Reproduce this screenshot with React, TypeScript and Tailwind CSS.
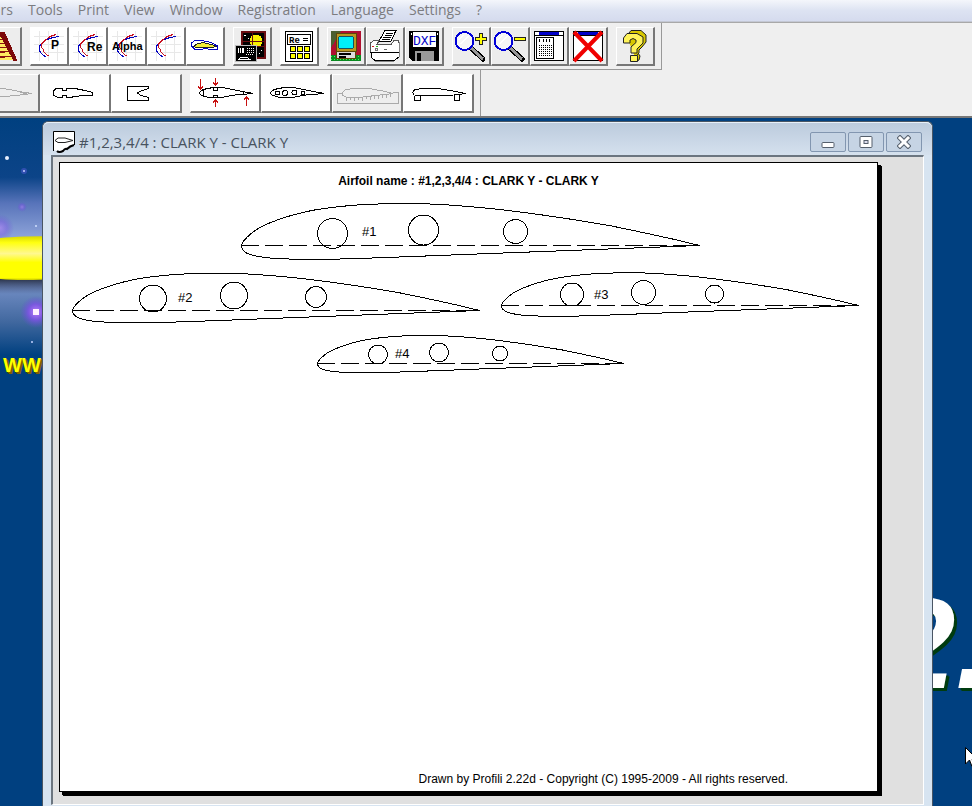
import React from "react";

type Pt = [number, number];

const UPPER: Pt[] = [
  [0, 0], [0.001, 0.0037], [0.004, 0.0089], [0.008, 0.0137], [0.012, 0.0179], [0.02, 0.0254],
  [0.03, 0.033], [0.04, 0.0392], [0.05, 0.0443], [0.06, 0.0487], [0.08, 0.0563], [0.1, 0.063],
  [0.12, 0.0687], [0.14, 0.0736], [0.16, 0.0776], [0.18, 0.0808], [0.2, 0.0834], [0.24, 0.0876],
  [0.28, 0.0901], [0.32, 0.0912], [0.36, 0.0916], [0.4, 0.0911], [0.44, 0.0893], [0.48, 0.0864],
  [0.52, 0.0831], [0.56, 0.079], [0.6, 0.0742], [0.65, 0.0676], [0.7, 0.0604], [0.75, 0.0525],
  [0.8, 0.0442], [0.85, 0.034], [0.9, 0.0232], [0.95, 0.0122], [1, 0],
];
const LOWER: Pt[] = [
  [0.9, -0.0038], [0.8, -0.0077], [0.7, -0.0115], [0.6, -0.0153], [0.5, -0.0191], [0.4, -0.023],
  [0.3, -0.0268], [0.2, -0.03], [0.16, -0.0303], [0.12, -0.0299], [0.1, -0.0294], [0.08, -0.0285],
  [0.06, -0.0271], [0.05, -0.026], [0.04, -0.0245], [0.03, -0.0226], [0.02, -0.0203],
  [0.012, -0.017], [0.008, -0.0143], [0.004, -0.0105], [0.001, -0.0059],
];

type Rib = { name: string; x: number; y: number; chord: number; label: Pt; holes: [number, number, number][] };

const RIBS: Rib[] = [
  { name: "#1", x: 241, y: 245.5, chord: 458, label: [362, 236], holes: [[332.5, 233.5, 15], [423.5, 230, 15], [515.5, 231.5, 12]] },
  { name: "#2", x: 72, y: 310.5, chord: 407, label: [178, 302], holes: [[153, 298.5, 13.5], [234, 295.5, 13.5], [316, 297, 10.5]] },
  { name: "#3", x: 501, y: 305.5, chord: 357, label: [594, 299], holes: [[572, 294.5, 11.5], [643.5, 292.5, 12], [714.5, 294, 9]] },
  { name: "#4", x: 317, y: 363.5, chord: 306, label: [395, 358], holes: [[378, 354.5, 9.5], [439, 352.5, 9.5], [500, 353.5, 7.5]] },
];

function RibPlan() {
  return (
    <svg viewBox="60 193 817 190" className="block w-full" role="img" aria-label="Airfoil ribs">
      {RIBS.map((r) => (
        <g key={r.name}>
          <g fill="none" stroke="#000" strokeWidth="1" shapeRendering="crispEdges">
            <polygon points={[...UPPER, ...LOWER].map(([x, y]) => `${r.x + 0.5 + x * r.chord},${r.y - y * r.chord}`).join(" ")} />
            <line x1={r.x} x2={r.x + r.chord} y1={r.y} y2={r.y} strokeDasharray="18 6" />
            {r.holes.map(([cx, cy, rad]) => (
              <circle key={cx} cx={cx} cy={cy} r={rad} />
            ))}
          </g>
          <text x={r.label[0]} y={r.label[1]} fontSize="13" fontFamily="Liberation Sans, sans-serif">{r.name}</text>
        </g>
      ))}
    </svg>
  );
}

/* ---------- main toolbar icons, 36 x 36 ---------- */

function Polar({ text, tx, ty, size = 12 }: { text?: string; tx?: number; ty?: number; size?: number }) {
  return (
    <>
      <path d="M3 8.500H33M3 16.500H33M3 24.500H33M8.500 3V33M17.500 3V33M26.500 3V33" stroke="#e8e8e8" />
      <path d="M28 8.500L22 9.500L16 11.500L12 14.500L8.500 18V23L11 26L14.500 29" stroke="#0000c0" />
      <path d="M25 6.500L19 8.500L14 12.500L10 16.500L10 19L12.500 21.500L13 24L16 27H18" stroke="#c81020" />
      {text && (
        <text x={tx} y={ty} fontSize={size} fontWeight="700" fontFamily="Liberation Sans, sans-serif" fill="#000" stroke="none">{text}</text>
      )}
    </>
  );
}

function Lens() {
  return (
    <>
      <path d="M18 20L30 31" stroke="#000" strokeWidth="5" strokeLinecap="round" />
      <path d="M18 20L30 31" stroke="#999" strokeWidth="3" />
      <circle cx="11.500" cy="13" r="9" fill="#f6f6f6" stroke="#0000d8" strokeWidth="2" />
      <path d="M6 12L10 7M8 16L15 8" stroke="#fff" strokeWidth="1.500" />
    </>
  );
}

function ReportFrame() {
  return (
    <>
      <rect x="3.500" y="3.500" width="29" height="29" fill="#fff" stroke="#000" />
      <rect x="8" y="4" width="20" height="3" fill="#0000c8" />
      <path d="M4 7.500H32" stroke="#000" />
    </>
  );
}

const icons = {
  ladder: (
    <>
      <path d="M2 32L14 5H20L32 32Z" fill="#ffe860" />
      <path d="M14 8H22M13 12L23 11M11 16L25 15M9 20L26 19M7 25L29 23M5 30L31 28" stroke="#8a1010" strokeWidth="1.500" />
      <path d="M16 5H20L32 32H30Z" fill="#7c0808" stroke="#7c0808" strokeWidth="2" />
    </>
  ),
  p: <Polar text="P" tx={20} ty={21} />,
  re: <Polar text="Re" tx={17} ty={23} />,
  alpha: <Polar text="Alpha" tx={3} ty={22} size={11} />,
  polar: <Polar />,
  foils: (
    <>
      <path d="M6 18.500L10 16L16 14.500L24 16.500L31 18.500L24 19.500L12 20Z" fill="#f2ee38" stroke="#222" />
      <path d="M8 21.500L4.500 18V15L8 12.500H15L24 14.500L30.500 18V21L27 22L18 20.500L14 21.500Z" stroke="#0000c0" />
    </>
  ),
  sim: (
    <>
      <rect x="7.500" y="3.500" width="23" height="26" fill="#000" stroke="#6a0c10" strokeWidth="2" />
      <circle cx="22" cy="13" r="6.500" fill="#f8f000" />
      <path d="M18.500 4V18M8 13H30M8 18H30" stroke="#6a0c10" />
      <path d="M10 7h2M14 10h1M27 22h1M25 25h1" stroke="#fff" />
      <rect x="1.500" y="17.500" width="21" height="16" fill="#000" stroke="#bbb" />
      <path d="M4.500 20V25M6.500 20V25M8 20L10 25M10 20L8 25" stroke="#fff" />
      <path d="M13 20.500H21M13 22.500H21M13 24.500H21M12 26.500H20" stroke="#fff" strokeDasharray="1 1" />
      <path d="M4 31.500L7 29.500H13L16 31.500H4" stroke="#fff" />
    </>
  ),
  calc: (
    <>
      <rect x="4.500" y="3.500" width="27" height="30" fill="#fff" stroke="#000" />
      <rect x="6.500" y="6.500" width="23" height="10" fill="#fff" stroke="#000" />
      <text x="8" y="15" fontSize="9" fontWeight="700" fontFamily="Liberation Mono, monospace" fill="#000" stroke="none">Re</text>
      <path d="M22 10.500h5M22 12.500h5" stroke="#000" />
      {[9, 16, 23].map((x) => [18.5, 25.5].map((y) => <rect key={`${x}-${y}`} x={x + 0.5} y={y} width="5" height="5" fill="#ffff00" stroke="#000" />))}
    </>
  ),
  tv: (
    <>
      <rect x="3" y="3" width="30" height="30" fill="#b01030" />
      <path d="M3 3H13L3 20Z" fill="#4c6030" />
      <path d="M3 27H33V33H3Z" fill="#0a8a20" />
      <path d="M3 28.500H33M3 31.500H33" stroke="#40ff50" strokeDasharray="1 2" />
      <rect x="8.500" y="5.500" width="20" height="18" fill="#b89820" stroke="#5c4808" />
      <rect x="10.500" y="8.500" width="15" height="12" rx="2" fill="#00f0f8" stroke="#185060" />
      <rect x="8.500" y="23.500" width="19" height="7" fill="#ddd" stroke="#5c4808" />
      <path d="M11 26H23M11 29H18" stroke="#000" strokeWidth="2" />
    </>
  ),
  printer: (
    <>
      <path d="M12 13L18 2.500H29L24 13Z" fill="#fff" stroke="#000" />
      <path d="M19 5.500H26M18 7.500H25M16 9.500H24M15 11.500H23" stroke="#000" />
      <path d="M3.500 15L7 12.500H12L10 16.500H24L27 12.500H31L32 15V24H3.500Z" fill="#fff" stroke="#555" />
      <path d="M4 24.500V29L8 32.500H27L32 29V24" fill="#fff" stroke="#000" />
      <path d="M3 24.500H32" stroke="#000" />
      <path d="M32.500 14V29M8 33.500H27" stroke="#888" />
      <path d="M5 18.500h2" stroke="#d02020" /><path d="M9 18.500h2" stroke="#20c020" />
      <rect x="8.500" y="20.500" width="2" height="2" stroke="#777" /><path d="M17 21.500h3" stroke="#666" />
    </>
  ),
  dxf: (
    <>
      <path d="M3 3H33V33H6L3 30Z" fill="#000" />
      <rect x="7" y="4" width="23" height="15" fill="#fff" />
      <text x="7" y="17" fontSize="13" fontFamily="Liberation Mono, monospace" fill="#0000c8" stroke="none">DXF</text>
      <rect x="9" y="23" width="19" height="10" fill="#999" />
      <rect x="11" y="25" width="4" height="8" fill="#000" />
      <path d="M31 6h1M5 6h1" stroke="#fff" strokeWidth="2" />
    </>
  ),
  zoomIn: (
    <>
      <Lens />
      <path d="M26.500 5.500H29.500V9.500H33.500V12.500H29.500V16.500H26.500V12.500H22.500V9.500H26.500Z" fill="#ffff00" stroke="#222" />
    </>
  ),
  zoomOut: (
    <>
      <Lens />
      <rect x="22.500" y="9.500" width="11" height="3" fill="#ffff00" stroke="#222" />
    </>
  ),
  report: (
    <>
      <ReportFrame />
      <rect x="5.500" y="9.500" width="17" height="21" fill="#fff" stroke="#000" />
      <path d="M8.500 11v3M12.500 11v3M15.500 11v3M18.500 11v3" stroke="#000" />
      <path d="M8 17.500h13M8 19.500h13M8 21.500h13M8 23.500h13M8 25.500h13M8 27.500h13" stroke="#000" strokeDasharray="1 1" />
    </>
  ),
  close: (
    <>
      <ReportFrame />
      <path d="M4 4L32 33M32 4L4 33" stroke="#f00000" strokeWidth="4" shapeRendering="auto" />
    </>
  ),
  help: (
    <g shapeRendering="auto" strokeLinejoin="round">
      <path d="M9.500 8L14 2.500H24L29 7V14L25 19L22 22V25L18 29" fill="#d8c800" stroke="#222" />
      <path d="M6.500 15V10L10 5.500H20L26 9V15L22 19L20 21V25H14V19L19 14.500V12L16 10.500L13 12V15Z" fill="#fff45a" stroke="#222" />
      <path d="M21 25L23 28L22 32L20 33" fill="#d8c800" stroke="#222" />
      <rect x="13.500" y="27.500" width="7" height="6" fill="#fff45a" stroke="#222" />
    </g>
  ),
};

type IconName = keyof typeof icons;

const GROUPS: { icon: IconName; label: string; grey?: boolean }[][] = [
  [{ icon: "ladder", label: "Wing", grey: true }],
  [
    { icon: "p", label: "Polars" }, { icon: "re", label: "Polars by Reynolds" }, { icon: "alpha", label: "Polars by alpha" },
    { icon: "polar", label: "Compare polars" }, { icon: "foils", label: "Compare airfoils" },
  ],
  [{ icon: "sim", label: "Process polars", grey: true }],
  [{ icon: "calc", label: "Reynolds calculator" }],
  [{ icon: "tv", label: "Screen", grey: true }, { icon: "printer", label: "Print", grey: true }, { icon: "dxf", label: "Export DXF", grey: true }],
  [
    { icon: "zoomIn", label: "Zoom in", grey: true }, { icon: "zoomOut", label: "Zoom out", grey: true },
    { icon: "report", label: "Report", grey: true }, { icon: "close", label: "Close window", grey: true },
  ],
  [{ icon: "help", label: "Help", grey: true }],
];

/* ---------- rib toolbar icons, 68 x 36 ---------- */

const FOIL = "M8 18L12 14.500L22 12.500H32L44 15L62 18.500L44 20L30 22.500L16 22L10 20Z";

const ribIcons = {
  plain: <path d="M6 18L12 14L24 12.500L40 14.500L52 17L62 18.500L50 20L30 22L12 21L6 18M50 17L57 19" stroke="#aaa" />,
  slots: <path d="M12.500 16L15 13.500H21.500V15.500H25.500V13.500H34L44 15.500L51.500 17.500V20.500H42L28 22.500H25.500V20.500H21.500V22.500H17L12.500 20Z" stroke="#000" />,
  notch: <path d="M36.500 11.500H15.500V25.500H36.500V22.500L29 20.500L25.500 18L30 15.500L36.500 13.500Z" stroke="#000" />,
  stations: (
    <>
      <path d={FOIL} stroke="#000" />
      <path d="M12.500 14V22M22.500 13V15.500H26.500V13M22.500 22V20.500H26.500V22M52.500 16V20" stroke="#000" />
      <path d="M9.500 4V14M7 11.500L9.500 14L12 11.500M24.500 3V10M22 7.500L24.500 10L27 7.500M24.500 32V25M22 27.500L24.500 25L27 27.500M55.500 31V22M53 24.500L55.500 22L58 24.500" stroke="#c81010" />
    </>
  ),
  holes: (
    <>
      <path d={FOIL} stroke="#000" />
      <g stroke="#000"><circle cx="15.500" cy="18" r="2" /><circle cx="23" cy="18" r="2.500" /><circle cx="32.500" cy="17.500" r="2.500" /><circle cx="41" cy="18" r="2" /></g>
    </>
  ),
  jig: (
    <>
      <path d="M9 18V20L13 22H30L60 18.500L50 16L36 13.500H20L12 15L9 18" stroke="#aaa" />
      <path d="M4.500 18.500H9M60 17.500H65V28.500H4.500V18M13.500 22v4M17.500 22v3M21.500 22v4M25.500 22v3M29.500 22v4M33.500 21v3M37.500 21v4M41.500 21v3M45.500 20v4M49.500 20v3M53.500 20v3M57.500 19v3" stroke="#aaa" />
    </>
  ),
  feet: <path d="M10.500 20.500L8.500 17.500L11 14.500L20 13.500H34L46 15.500L61.500 18.500L50 20L24 20.500H10.500M10.500 20.500V25.500H16.500V20.500M50.500 19.500V25.500H55.500V19.500" stroke="#000" />,
};

const RIB_GROUPS: { icon: keyof typeof ribIcons; label: string; off?: boolean }[][] = [
  [{ icon: "plain", label: "Plain rib", off: true }, { icon: "slots", label: "Spar slots" }, { icon: "notch", label: "Trailing edge notch" }],
  [
    { icon: "stations", label: "Stations" }, { icon: "holes", label: "Lightening holes" },
    { icon: "jig", label: "Jig", off: true }, { icon: "feet", label: "Building feet" },
  ],
];

const raised = "block h-[39px] border-t border-l border-r-2 border-b-2 border-t-white border-l-white border-r-[#777] border-b-[#777]";

function MenuBar() {
  return (
    <nav className="flex h-[22px] gap-[15px] overflow-hidden border-b border-[#c4c8d4] bg-linear-to-b from-[#f4f6fb] via-[#dde3f2] to-[#d5dbee] text-[14px] leading-[19px] text-[#7c7c80]">
      <button className="-ml-[19px] h-[19px] w-[32px] text-right">Bars</button>
      {["Tools", "Print", "View", "Window", "Registration", "Language", "Settings", "?"].map((m) => (
        <button key={m} className="h-[19px]">{m}</button>
      ))}
    </nav>
  );
}

function Toolbars() {
  return (
    <div className="border-t border-b-2 border-t-[#a8a8a8] border-b-[#777] bg-[#efefef]">
      <div className="flex h-[47px] w-fit items-center gap-2 border-r border-b border-[#999] pr-[6px]">
        {GROUPS.map((g, i) => (
          <div key={i} className="flex first:-ml-[17px]">
            {g.map((b) => (
              <button key={b.icon} aria-label={b.label} className={`${raised} w-[39px] ${b.grey ? "bg-[#ededed]" : "bg-white"}`}>
                <svg viewBox="0 0 36 36" className="block size-9" fill="none" shapeRendering="crispEdges">{icons[b.icon]}</svg>
              </button>
            ))}
          </div>
        ))}
      </div>
      <div className="flex h-[46px] w-fit items-center gap-2 border-r border-[#999] pr-[6px]">
        {RIB_GROUPS.map((g, i) => (
          <div key={i} className="flex first:-ml-[31px]">
            {g.map((b) => (
              <button key={b.icon} aria-label={b.label} disabled={b.off} className={`${raised} w-[71px] ${b.off ? "bg-[#eeeeee]" : "bg-white"}`}>
                <svg viewBox="0 0 68 36" className="block h-9 w-[68px]" fill="none" shapeRendering="crispEdges">{ribIcons[b.icon]}</svg>
              </button>
            ))}
          </div>
        ))}
      </div>
    </div>
  );
}

function Splash() {
  return (
    <div className="absolute inset-0 overflow-hidden">
      <svg className="absolute top-0 left-0" width="60" height="260" viewBox="0 118 60 260" aria-hidden="true">
        <defs>
          <linearGradient id="sky" x1="0" y1="0" x2="0" y2="1">
            <stop offset="0" stopColor="#004080" />
            <stop offset="0.250" stopColor="#0c4488" />
            <stop offset="0.360" stopColor="#5874ba" />
            <stop offset="0.500" stopColor="#8ca2d8" />
            <stop offset="0.720" stopColor="#6f8bc2" />
            <stop offset="0.860" stopColor="#41689f" />
            <stop offset="1" stopColor="#004080" />
          </linearGradient>
          <linearGradient id="disk" x1="0" y1="0" x2="0" y2="1">
            <stop offset="0" stopColor="#d8d800" />
            <stop offset="0.150" stopColor="#ffff10" />
            <stop offset="0.400" stopColor="#fff890" />
            <stop offset="0.600" stopColor="#ffff00" />
            <stop offset="0.950" stopColor="#ffff00" />
            <stop offset="1" stopColor="#c8c800" />
          </linearGradient>
          <radialGradient id="glow">
            <stop offset="0" stopColor="#c080ff" />
            <stop offset="0.500" stopColor="#8050e8" stopOpacity="0.800" />
            <stop offset="1" stopColor="#6050d0" stopOpacity="0" />
          </radialGradient>
          <linearGradient id="shade" x1="0" y1="0" x2="0" y2="1">
            <stop offset="0" stopColor="#181c28" />
            <stop offset="1" stopColor="#303c60" stopOpacity="0" />
          </linearGradient>
        </defs>
        <rect y="118" width="60" height="237" fill="url(#sky)" />
        <circle cx="0" cy="228" r="14" fill="url(#glow)" opacity="0.500" />
        <circle cx="22" cy="207" r="5" fill="url(#glow)" opacity="0.500" />
        <path d="M0 276L60 278V294H0Z" fill="url(#shade)" />
        <path d="M0 238Q20 236 60 236V279Q20 281 0 279Z" fill="url(#disk)" />
        <circle cx="36" cy="312" r="16" fill="url(#glow)" />
        <rect x="33" y="309" width="6" height="6" fill="#fff0ff" />
        <circle cx="7" cy="158" r="2" fill="#e8f0ff" />
        <circle cx="24" cy="171" r="3" fill="#3050b0" />
        <circle cx="24" cy="171" r="1" fill="#c0c8ff" />
        <circle cx="36" cy="226" r="1" fill="#d0e0ff" />
        <circle cx="32" cy="342" r="1" fill="#c0d0ff" />
      </svg>
      <span className="absolute top-[235px] left-[3px] font-[Liberation_Sans,sans-serif] text-[20px] leading-[24px] font-bold text-[#ffff00] [text-shadow:1px_1px_0_#806000,2px_2px_0_#806000]">WW</span>
      <span className="absolute right-[-19px] bottom-[98px] font-[Liberation_Sans,sans-serif] text-[128px] leading-[128px] font-bold text-white italic [text-shadow:2px_2px_0_#003c10,3px_3px_0_#003c10]">2.</span>
    </div>
  );
}

const capButton = "grid h-5 w-9 place-items-center rounded-[2px] border border-[#8296b0] bg-[#c6d4e4]";

function DrawingWindow() {
  return (
    <section className="relative mt-[3px] mr-[39px] ml-[42px] flex flex-1 flex-col rounded-t-md border border-b-0 border-[#4a5664] bg-[#d7e4f1]">
      <header className="flex h-[33px] items-center rounded-t-md border-t border-[#e8f0f8] bg-linear-to-b from-[#bccbdd] to-[#d5e1ee] pt-[5px] pr-[10px] pl-[10px]">
        <svg width="22" height="22" viewBox="0 0 22 22" className="mr-1" fill="none" aria-hidden="true">
          <path d="M.5 21V.5H21.500V14Q17 15 15 18Q13 17 11 20Q6 22 5 20L.5 19Z" fill="#fff" />
          <path d="M.5 20V.5H21.500V14" stroke="#000" />
          <path d="M21 14Q17 15 14 18Q12 17 10 20Q6 22 4 20" stroke="#000" strokeWidth="2" />
          <path d="M2 9.500L5 7H12L20 9.500L12 11.500H5Z" stroke="#222" />
        </svg>
        <h1 className="flex-1 text-[15px] leading-[20px] text-[#48535f]">#1,2,3,4/4 : CLARK Y - CLARK Y</h1>
        <div className="flex gap-[2px]">
          <button aria-label="Minimize" className={capButton}>
            <svg width="14" height="14" viewBox="0 0 14 14"><rect x="1" y="7.500" width="12" height="5" rx="1" fill="#fff" stroke="#555f6c" /></svg>
          </button>
          <button aria-label="Maximize" className={capButton}>
            <svg width="14" height="14" viewBox="0 0 14 14"><rect x="1" y="1.500" width="12" height="11" rx="1" fill="#fff" stroke="#555f6c" /><rect x="5" y="5.500" width="4" height="3" fill="#dde" stroke="#555f6c" /></svg>
          </button>
          <button aria-label="Close" className={capButton}>
            <svg width="14" height="14" viewBox="0 0 14 14" strokeLinecap="square"><path d="M3 3L11 11M11 3L3 11" stroke="#555f6c" strokeWidth="5" /><path d="M3 3L11 11M11 3L3 11" stroke="#fff" strokeWidth="3" /></svg>
          </button>
        </div>
      </header>
      <div className="mx-2 mb-[1px] flex flex-1 flex-col border-t-2 border-r border-b border-l-2 border-t-[#6c7680] border-r-white border-b-white border-l-[#6c7680] bg-[#e0e0e0] pt-[5px] pr-[45px] pb-[12px] pl-[6px]">
        <article className="flex flex-1 flex-col border border-black bg-white font-[Liberation_Sans,sans-serif] text-black shadow-[3px_3px_0_#000,4px_4px_0_#000]">
          <h2 className="pt-[10px] pb-1 text-center text-[12px] leading-[16px] font-bold">Airfoil name : #1,2,3,4/4 : CLARK Y - CLARK Y</h2>
          <RibPlan />
          <p className="mt-auto pr-[89px] pb-[4px] text-right text-[12px] leading-[16px]">Drawn by Profili 2.22d - Copyright (C) 1995-2009 - All rights reserved.</p>
        </article>
      </div>
    </section>
  );
}

export default function App() {
  return (
    <div className="flex h-screen min-h-[600px] flex-col overflow-hidden bg-[#004080] font-[Open_Sans,Noto_Sans,sans-serif]">
      <MenuBar />
      <Toolbars />
      <main className="relative flex flex-1 flex-col">
        <Splash />
        <DrawingWindow />
        <svg className="absolute right-[-6px] bottom-[38px]" width="13" height="21" viewBox="0 0 13 21" aria-hidden="true">
          <path d="M.5 .5V17L4.500 13L7 19.500L9.500 18.500L7 12.500H12.500Z" fill="#fff" stroke="#000" />
        </svg>
      </main>
    </div>
  );
}
